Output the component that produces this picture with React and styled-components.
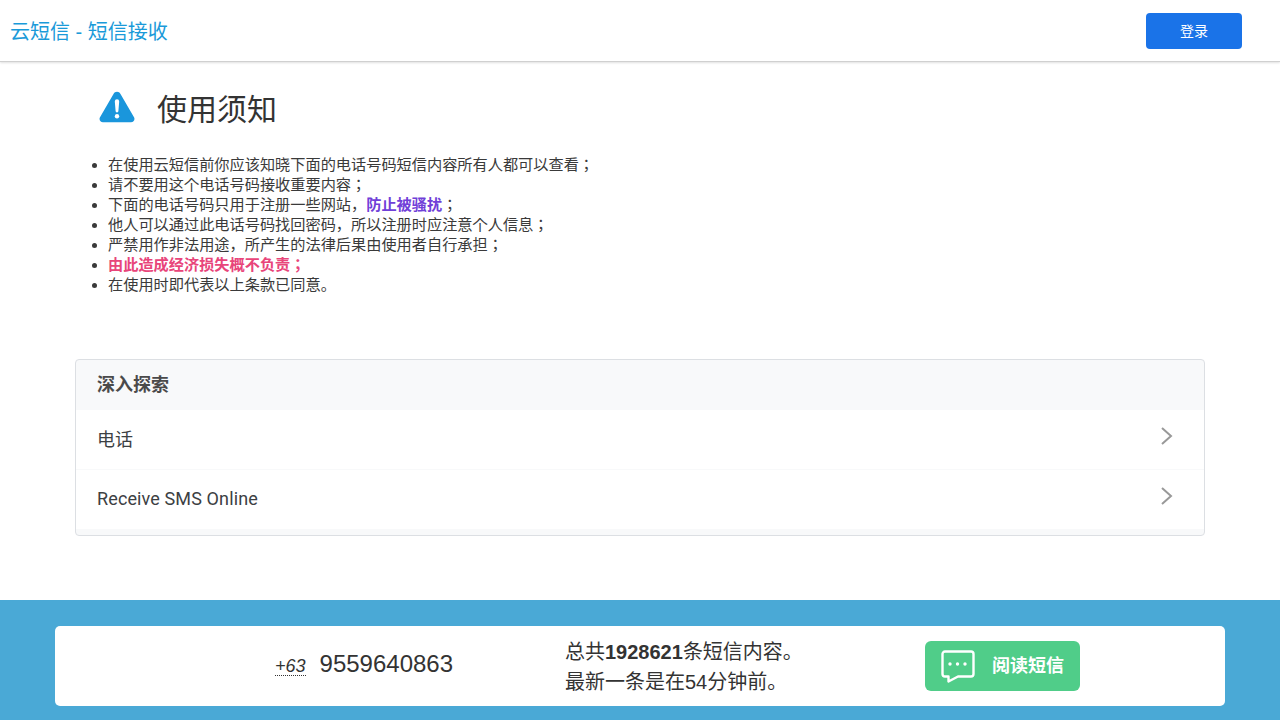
import React from 'react';
import styled, { createGlobalStyle } from 'styled-components';

const GlobalStyle = createGlobalStyle`
    html, body {
        margin: 0;
        padding: 0;
        background: #fff;
        font-family: "Liberation Sans", "Noto Sans CJK SC", sans-serif;
        color: #333;
    }
`;

const Page = styled.div`
    height: 720px;
    display: flex;
    flex-direction: column;
    overflow: hidden;
`;

const Header = styled.header`
    height: 62px;
    flex: none;
    box-sizing: border-box;
    display: flex;
    align-items: center;
    justify-content: space-between;
    padding: 0 38px 0 10px;
    border-bottom: 1px solid #d0d0d0;
    box-shadow: 0 1px 2px rgba(0, 0, 0, 0.12);
`;

const Brand = styled.div`
    font-size: 20px;
    color: #1a9ad9;
`;

const LoginButton = styled.button`
    width: 96px;
    height: 36px;
    padding: 0 0 2px;
    border: none;
    border-radius: 4px;
    background: #1a73e8;
    color: #fff;
    font-family: inherit;
    font-size: 14px;
`;

const Notice = styled.section`
    padding: 0 0 0 99px;
`;

const NoticeTitle = styled.div`
    display: flex;
    align-items: center;
    gap: 21px;
    height: 62px;
    margin-top: 14px;
    font-size: 30px;
    color: #333;
`;

const RuleList = styled.ul`
    margin: 17px 0 0;
    padding: 0 0 0 9px;
    list-style: disc;
    font-family: "Liberation Sans", "Noto Sans CJK JP", sans-serif;
    font-size: 15.2px;
    line-height: 20px;
    color: #3a3a3a;
`;

const Mark = styled.b`
    color: ${props => props.$color};
`;

const Card = styled.section`
    margin: 64px 75px 0;
    border: 1px solid #dcdfe3;
    border-radius: 4px;
    background: #f8f9fa;
    padding-bottom: 6px;
    overflow: hidden;
`;

const CardHead = styled.div`
    height: 50px;
    line-height: 50px;
    padding-left: 21px;
    font-size: 18px;
    font-weight: bold;
    color: #4a4a4a;
`;

const CardRow = styled.div`
    height: 59px;
    box-sizing: border-box;
    padding: 0 26px 3px 21px;
    background: #fff;
    display: flex;
    align-items: center;
    justify-content: space-between;
    font-family: Roboto, "Noto Sans CJK SC", sans-serif;
    font-size: 18px;
    letter-spacing: 0.12px;
    color: #3c4043;
    & + & {
        margin-top: 1px;
    }
`;

const Chevron = styled.svg`
    width: 24px;
    height: 24px;
    margin-top: -4px;
    fill: none;
    stroke: #999;
    stroke-width: 2;
`;

const Footer = styled.footer`
    margin-top: auto;
    height: 120px;
    flex: none;
    box-sizing: border-box;
    padding: 26px 55px 14px;
    background: #4aa9d6;
`;

const FooterCard = styled.div`
    height: 80px;
    background: #fff;
    border-radius: 5px;
    display: flex;
    align-items: center;
    padding-left: 220px;
`;

const PhoneBlock = styled.div`
    width: 290px;
    margin-bottom: 4px;
    display: flex;
    align-items: baseline;
    gap: 14px;
`;

const Code = styled.span`
    font-size: 18px;
    line-height: 18px;
    font-style: italic;
    border-bottom: 1px dotted #333;
`;

const Number = styled.span`
    font-size: 24px;
`;

const Stats = styled.div`
    width: 360px;
    margin-top: 2px;
    font-size: 20px;
    line-height: 30px;
`;

const ReadButton = styled.div`
    width: 155px;
    height: 50px;
    box-sizing: border-box;
    background: #50cd89;
    border-radius: 6px;
    color: #fff;
    font-size: 18px;
    font-weight: bold;
    display: flex;
    align-items: center;
    padding-left: 16px;
    gap: 17px;
`;

const ReadLabel = styled.span`
    margin-bottom: 4px;
`;

const rules = [
    <>在使用云短信前你应该知晓下面的电话号码短信内容所有人都可以查看；</>,
    <>请不要用这个电话号码接收重要内容；</>,
    <>下面的电话号码只用于注册一些网站，<Mark $color="#7040d8">防止被骚扰</Mark>；</>,
    <>他人可以通过此电话号码找回密码，所以注册时应注意个人信息；</>,
    <>严禁用作非法用途，所产生的法律后果由使用者自行承担；</>,
    <Mark $color="#e8457a">由此造成经济损失概不负责；</Mark>,
    <>在使用时即代表以上条款已同意。</>,
];

const App = () => {
    return (
        <Page>
            <GlobalStyle />
            <Header>
                <Brand>云短信 - 短信接收</Brand>
                <LoginButton>登录</LoginButton>
            </Header>
            <Notice>
                <NoticeTitle>
                    <svg width="37" height="32" viewBox="0 0 37 32">
                        <path d="M18 .8c-1.500 0-2.800.8-3.500 2.100L1 26.200C-.3 28.500 1.300 31.300 4 31.300h28c2.700 0 4.300-2.800 3-5.100L21.500 2.900C20.800 1.600 19.500.8 18 .8z" fill="#1a96dc" />
                        <path d="M15.800 10.500a2.200 2.200 0 0 1 4.400 0l-.8 9.500a1.400 1.400 0 0 1-2.800 0z" fill="#fff" />
                        <circle cx="18" cy="25.300" r="2.200" fill="#fff" />
                    </svg>
                    使用须知
                </NoticeTitle>
                <RuleList>
                    {rules.map((rule, i) => <li key={i}>{rule}</li>)}
                </RuleList>
            </Notice>
            <Card>
                <CardHead>深入探索</CardHead>
                {['电话', 'Receive SMS Online'].map(label => (
                    <CardRow key={label}>
                        {label}
                        <Chevron viewBox="0 0 24 24"><path d="M8 4l9 8-9 8" /></Chevron>
                    </CardRow>
                ))}
            </Card>
            <Footer>
                <FooterCard>
                    <PhoneBlock>
                        <Code>+63</Code>
                        <Number>9559640863</Number>
                    </PhoneBlock>
                    <Stats>
                        总共<b>1928621</b>条短信内容。<br />
                        最新一条是在54分钟前。
                    </Stats>
                    <ReadButton>
                        <svg width="34" height="33" viewBox="0 0 34 33" fill="none" stroke="#fff" strokeWidth="2.400">
                            <path d="M4 1.500h26a2.500 2.500 0 0 1 2.500 2.500v20a2.500 2.500 0 0 1-2.500 2.500H17l-9.500 5v-5H4A2.500 2.500 0 0 1 1.500 24V4A2.500 2.500 0 0 1 4 1.500z" strokeLinejoin="round" />
                            <circle cx="9" cy="14" r="1.700" fill="#fff" stroke="none" />
                            <circle cx="16.500" cy="14" r="1.700" fill="#fff" stroke="none" />
                            <circle cx="24" cy="14" r="1.700" fill="#fff" stroke="none" />
                        </svg>
                        <ReadLabel>阅读短信</ReadLabel>
                    </ReadButton>
                </FooterCard>
            </Footer>
        </Page>
    );
};

export default App;
